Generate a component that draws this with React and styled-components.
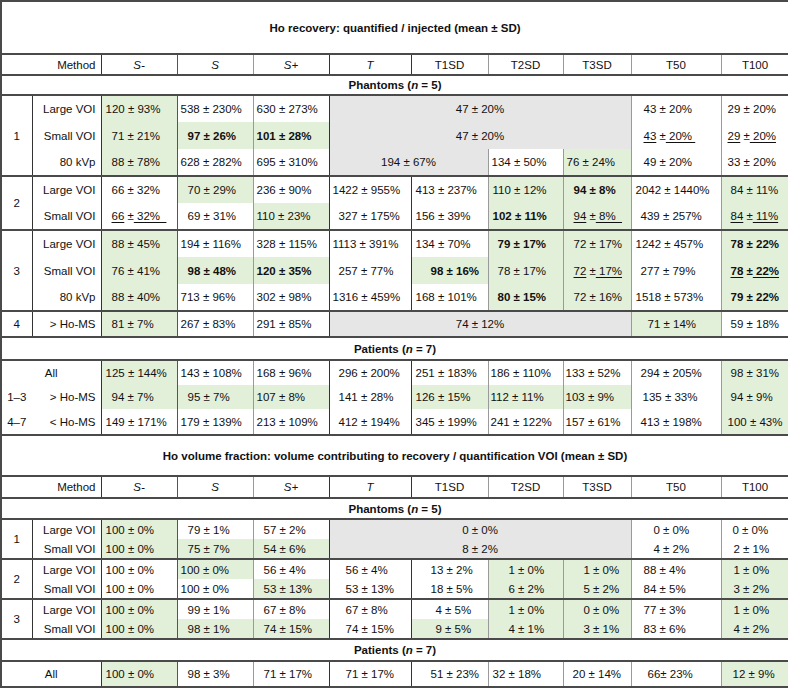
import React from 'react';
import styled, { createGlobalStyle } from 'styled-components';

const GlobalStyle = createGlobalStyle`
  html, body { margin: 0; padding: 0; background: #fff; }
  body { font-family: "Liberation Sans", Arial, sans-serif; }
`;

const GREEN = '#e2efd9';
const GRAY = '#e6e6e6';
const DARK = '#333';
const HLINE = '2px solid #4a4a4a';
const LIGHT = '#9a9a9a';
// right border colour of each of the 11 columns
const COL_RIGHT = [DARK, DARK, '#555', LIGHT, DARK, DARK, LIGHT, LIGHT, LIGHT, LIGHT, DARK];
const COL_WIDTHS = [31, 69, 76, 76, 76, 82, 77, 75, 68, 90, 68];

const Table = styled.table`
  border-collapse: collapse;
  table-layout: fixed;
  width: 788px;
  font-family: "Liberation Sans", Arial, sans-serif;
  font-size: 11.5px;
  color: #111;
  border-top: ${HLINE};
  border-left: 2px solid #4a4a4a;
`;

const Row = styled.tr`
  height: ${(p) => p.$h}px;
`;

const BaseCell = styled.td`
  padding: 0;
  vertical-align: middle;
  white-space: nowrap;
  overflow: hidden;
  border-right: 1px solid ${(p) => p.$rc || DARK};
  border-bottom: ${(p) => (p.$bb ? HLINE : 'none')};
`;

const TitleCell = styled(BaseCell)`
  text-align: center;
  font-weight: bold;
  border-right: 2px solid #4a4a4a;
  border-bottom: ${HLINE};
`;

const HeadCell = styled(BaseCell)`
  text-align: center;
  font-style: ${(p) => (p.$italic ? 'italic' : 'normal')};
  border-bottom: ${HLINE};
`;

const MethodHead = styled(BaseCell)`
  text-align: right;
  padding-right: 5px;
  border-bottom: ${HLINE};
`;

const GroupCell = styled(BaseCell)`
  text-align: center;
`;

const LabelCell = styled(BaseCell)`
  text-align: right;
  padding-right: 5px;
`;

const DataCell = styled(BaseCell)`
  text-align: ${(p) => (p.$pl == null ? 'center' : 'left')};
  padding-left: ${(p) => (p.$pl == null ? 0 : p.$pl)}px;
  background: ${(p) => (p.$green ? GREEN : p.$gray ? GRAY : '#fff')};
  font-weight: ${(p) => (p.$bold ? 'bold' : 'normal')};
  ${(p) => (p.$outer ? 'border-right: 2px solid #4a4a4a;' : '')}
`;

const Ul = styled.span`
  text-decoration: underline;
  text-underline-offset: 2px;
`;

const Em = styled.i`
  font-style: italic;
`;

const UL = (a, b, trail = '') => (
  <>
    <Ul>{a}</Ul> ±<Ul>{'\u00a0' + b + trail}</Ul>
  </>
);

const c = (t, pl, f = '', span = 1) => ({ t, pl, f, span });

const T1_GROUPS = [
  {
    n: '1',
    rows: [
      { label: 'Large VOI', h: 27, cells: [c('120 ± 93%', 4, 'g'), c('538 ± 230%', 3), c('630 ± 273%', 3), c('47 ± 20%', null, 'k', 4), c('43 ± 20%', 12), c('29 ± 20%', 6)] },
      { label: 'Small VOI', h: 27, cells: [c('71 ± 21%', 10, 'g'), c('97 ± 26%', 10, 'gb'), c('101 ± 28%', 3, 'gb'), c('47 ± 20%', null, 'k', 4), c(UL('43', '20%', '\u00a0'), 12), c(UL('29', '20%'), 6)] },
      { label: '80 kVp', h: 27, cells: [c('88 ± 78%', 10, 'g'), c('628 ± 282%', 3), c('695 ± 310%', 3), c('194 ± 67%', null, 'k', 2), c('134 ± 50%', 3), c('76 ± 24%', 3, 'g'), c('49 ± 20%', 12), c('33 ± 20%', 6)] },
    ],
  },
  {
    n: '2',
    rows: [
      { label: 'Large VOI', h: 27, cells: [c('66 ± 32%', 10), c('70 ± 29%', 10, 'g'), c('236 ± 90%', 3), c('1422 ± 955%', 3), c('413 ± 237%', 4), c('110 ± 12%', 4, 'g'), c('94 ± 8%', 10, 'gb'), c('2042 ± 1440%', 4), c('84 ± 11%', 9, 'g')] },
      { label: 'Small VOI', h: 27, cells: [c(UL('66', '32%', '\u00a0\u00a0'), 10), c('69 ± 31%', 10), c('110 ± 23%', 3, 'g'), c('327 ± 175%', 9), c('156 ± 39%', 4), c('102 ± 11%', 4, 'gb'), c(UL('94', '8%', '\u00a0\u00a0'), 10, 'g'), c('439 ± 257%', 9), c(UL('84', '11%'), 9, 'g')] },
    ],
  },
  {
    n: '3',
    rows: [
      { label: 'Large VOI', h: 27, cells: [c('88 ± 45%', 10, 'g'), c('194 ± 116%', 3), c('328 ± 115%', 3), c('1113 ± 391%', 3), c('134 ± 70%', 4), c('79 ± 17%', 9, 'gb'), c('72 ± 17%', 10, 'g'), c('1242 ± 457%', 4), c('78 ± 22%', 9, 'gb')] },
      { label: 'Small VOI', h: 27, cells: [c('76 ± 41%', 10, 'g'), c('98 ± 48%', 10, 'gb'), c('120 ± 35%', 3, 'gb'), c('257 ± 77%', 9), c('98 ± 16%', 19, 'gb'), c('78 ± 17%', 9, 'g'), c(UL('72', '17%'), 10, 'g'), c('277 ± 79%', 9), c(UL('78', '22%'), 9, 'gb')] },
      { label: '80 kVp', h: 27, cells: [c('88 ± 40%', 10, 'g'), c('713 ± 96%', 3), c('302 ± 98%', 3), c('1316 ± 459%', 3), c('168 ± 101%', 4), c('80 ± 15%', 9, 'gb'), c('72 ± 16%', 10, 'g'), c('1518 ± 573%', 4), c('79 ± 22%', 9, 'gb')] },
    ],
  },
  {
    n: '4',
    rows: [
      { label: '> Ho-MS', h: 26, cells: [c('81 ± 7%', 10, 'g'), c('267 ± 83%', 3), c('291 ± 85%', 3), c('74 ± 12%', null, 'k', 4), c('71 ± 14%', 16, 'g'), c('59 ± 18%', 9)] },
    ],
  },
];

const T1_PATIENTS = [
  { label: 'All', h: 25, cells: [c('125 ± 144%', 4, 'g'), c('143 ± 108%', 3), c('168 ± 96%', 3), c('296 ± 200%', 9), c('251 ± 183%', 4), c('186 ± 110%', 2), c('133 ± 52%', 2), c('294 ± 205%', 9), c('98 ± 31%', 9, 'g')] },
  { pre: '1–3', label: '> Ho-MS', h: 24, cells: [c('94 ± 7%', 10, 'g'), c('95 ± 7%', 10, 'g'), c('107 ± 8%', 3, 'g'), c('141 ± 28%', 9), c('126 ± 15%', 4, 'g'), c('112 ± 11%', 2, 'g'), c('103 ± 9%', 2, 'g'), c('135 ± 33%', 11), c('94 ± 9%', 9, 'g')] },
  { pre: '4–7', label: '< Ho-MS', h: 26, cells: [c('149 ± 171%', 4), c('179 ± 139%', 3), c('213 ± 109%', 3), c('412 ± 194%', 9), c('345 ± 199%', 4), c('241 ± 122%', 2), c('157 ± 61%', 2), c('413 ± 198%', 9), c('100 ± 43%', 6, 'g')] },
];

const T2_GROUPS = [
  {
    n: '1',
    rows: [
      { label: 'Large VOI', h: 20, cells: [c('100 ± 0%', 4, 'g'), c('79 ± 1%', 10), c('57 ± 2%', 10), c('0 ± 0%', null, 'k', 4), c('0 ± 0%', 22), c('0 ± 0%', 11)] },
      { label: 'Small VOI', h: 20, cells: [c('100 ± 0%', 4, 'g'), c('75 ± 7%', 10, 'g'), c('54 ± 6%', 10, 'g'), c('8 ± 2%', null, 'k', 4), c('4 ± 2%', 22), c('2 ± 1%', 12)] },
    ],
  },
  {
    n: '2',
    rows: [
      { label: 'Large VOI', h: 20, cells: [c('100 ± 0%', 4), c('100 ± 0%', 3, 'g'), c('56 ± 4%', 10), c('56 ± 4%', 16), c('13 ± 2%', 19), c('1 ± 0%', 20, 'g'), c('1 ± 0%', 20, 'g'), c('88 ± 4%', 12), c('1 ± 0%', 12, 'g')] },
      { label: 'Small VOI', h: 20, cells: [c('100 ± 0%', 4), c('100 ± 0%', 3), c('53 ± 13%', 10, 'g'), c('53 ± 13%', 16), c('18 ± 5%', 19), c('6 ± 2%', 20, 'g'), c('5 ± 2%', 20, 'g'), c('84 ± 5%', 12), c('3 ± 2%', 12, 'g')] },
    ],
  },
  {
    n: '3',
    rows: [
      { label: 'Large VOI', h: 20, cells: [c('100 ± 0%', 4, 'g'), c('99 ± 1%', 10), c('67 ± 8%', 10), c('67 ± 8%', 16), c('4 ± 5%', 24), c('1 ± 0%', 20, 'g'), c('0 ± 0%', 20, 'g'), c('77 ± 3%', 12), c('1 ± 0%', 12, 'g')] },
      { label: 'Small VOI', h: 20, cells: [c('100 ± 0%', 4, 'g'), c('98 ± 1%', 10, 'g'), c('74 ± 15%', 10, 'g'), c('74 ± 15%', 16), c('9 ± 5%', 24, 'g'), c('4 ± 1%', 20, 'g'), c('3 ± 1%', 20, 'g'), c('83 ± 6%', 12), c('4 ± 2%', 12, 'g')] },
    ],
  },
];

const T2_PATIENTS = [
  { label: 'All', h: 26, cells: [c('100 ± 0%', 4, 'g'), c('98 ± 3%', 10), c('71 ± 17%', 10), c('71 ± 17%', 16), c('51 ± 23%', 19), c('32 ± 18%', 4), c('20 ± 14%', 9), c('66± 23%', 16), c('12 ± 9%', 11, 'g')] },
];

const HEADERS = [
  { t: 'S-', it: true },
  { t: 'S', it: true },
  { t: 'S+', it: true },
  { t: 'T', it: true },
  { t: 'T1SD' },
  { t: 'T2SD' },
  { t: 'T3SD' },
  { t: 'T50' },
  { t: 'T100' },
];

function renderCells(cells, last, keyBase) {
  let col = 2;
  return cells.map((cell, i) => {
    const end = col + cell.span - 1;
    const el = (
      <DataCell
        key={`${keyBase}-${i}`}
        colSpan={cell.span}
        $pl={cell.pl}
        $green={cell.f.includes('g')}
        $gray={cell.f.includes('k')}
        $bold={cell.f.includes('b')}
        $rc={COL_RIGHT[end]}
        $outer={end === 10}
        $bb={last}
      >
        {cell.t}
      </DataCell>
    );
    col = end + 1;
    return el;
  });
}

function Title({ text, h }) {
  return (
    <Row $h={h}>
      <TitleCell colSpan={11}>{text}</TitleCell>
    </Row>
  );
}

function HeaderRow({ h }) {
  return (
    <Row $h={h}>
      <MethodHead colSpan={2}>Method</MethodHead>
      {HEADERS.map((hd, i) => (
        <HeadCell key={hd.t} $italic={hd.it} $rc={COL_RIGHT[i + 2]}>
          {hd.t}
        </HeadCell>
      ))}
    </Row>
  );
}

function SectionRow({ name, n, h }) {
  return (
    <Row $h={h}>
      <TitleCell colSpan={11}>
        {name} (<Em>n</Em> = {n})
      </TitleCell>
    </Row>
  );
}

function Groups({ groups, prefix }) {
  return groups.map((g) =>
    g.rows.map((r, i) => {
      const last = i === g.rows.length - 1;
      return (
        <Row key={`${prefix}-${g.n}-${i}`} $h={r.h}>
          {i === 0 && (
            <GroupCell rowSpan={g.rows.length} $bb>
              {g.n}
            </GroupCell>
          )}
          <LabelCell $bb={last}>{r.label}</LabelCell>
          {renderCells(r.cells, last, `${prefix}-${g.n}-${i}`)}
        </Row>
      );
    })
  );
}

function Patients({ rows, prefix }) {
  return rows.map((r, i) => {
    const last = i === rows.length - 1;
    return (
      <Row key={`${prefix}-p-${i}`} $h={r.h}>
        {r.pre ? (
          <>
            <GroupCell $rc="transparent" $bb={last}>
              {r.pre}
            </GroupCell>
            <LabelCell $bb={last}>{r.label}</LabelCell>
          </>
        ) : (
          <GroupCell colSpan={2} $bb={last}>
            {r.label}
          </GroupCell>
        )}
        {renderCells(r.cells, last, `${prefix}-p-${i}`)}
      </Row>
    );
  });
}

export default function App() {
  return (
    <>
      <GlobalStyle />
      <Table>
        <colgroup>
          {COL_WIDTHS.map((w, i) => (
            <col key={i} style={{ width: w }} />
          ))}
        </colgroup>
        <tbody>
          <Title text="Ho recovery: quantified / injected (mean ± SD)" h={53} />
          <HeaderRow h={21} />
          <SectionRow name="Phantoms" n={5} h={20} />
          <Groups groups={T1_GROUPS} prefix="a" />
          <SectionRow name="Patients" n={7} h={23} />
          <Patients rows={T1_PATIENTS} prefix="a" />
          <Title text="Ho volume fraction: volume contributing to recovery / quantification VOI (mean ± SD)" h={41} />
          <HeaderRow h={22} />
          <SectionRow name="Phantoms" n={5} h={21} />
          <Groups groups={T2_GROUPS} prefix="b" />
          <SectionRow name="Patients" n={7} h={22} />
          <Patients rows={T2_PATIENTS} prefix="b" />
        </tbody>
      </Table>
    </>
  );
}
